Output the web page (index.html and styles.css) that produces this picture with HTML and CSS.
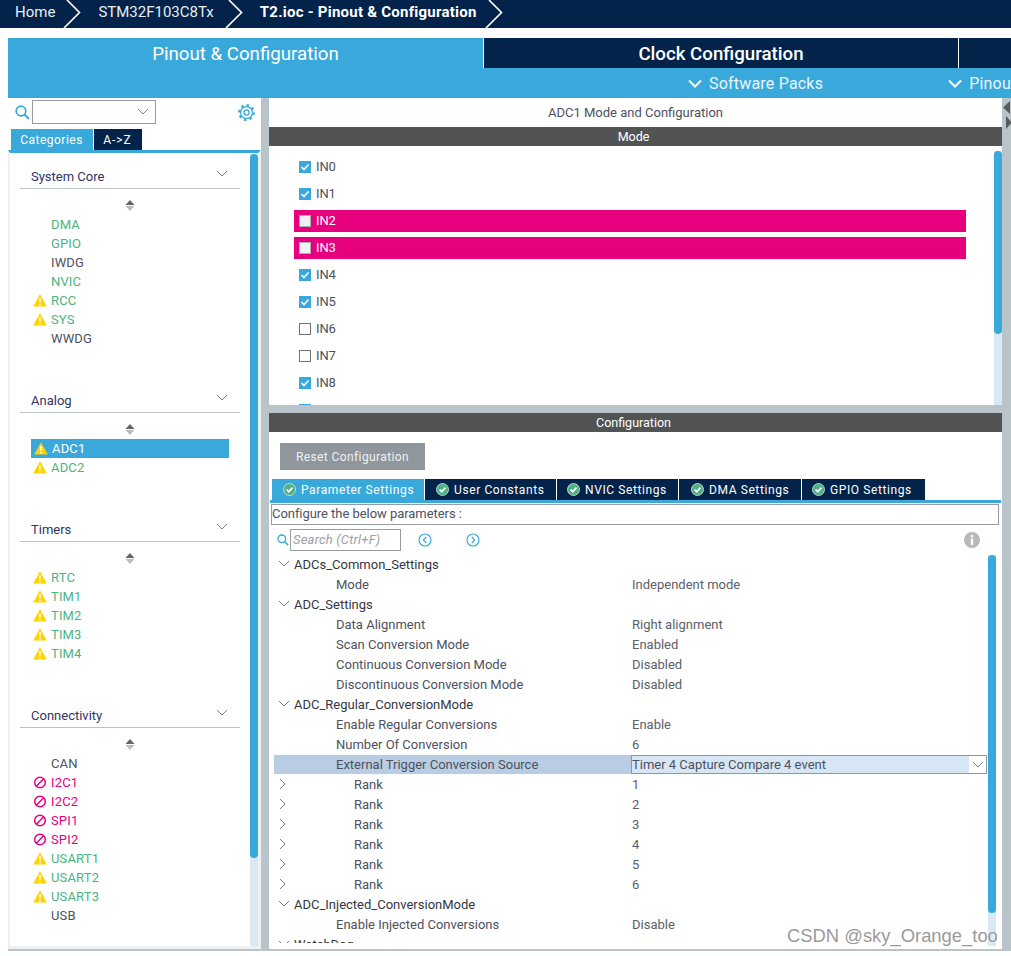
FILE: index.html
```html
<!DOCTYPE html>
<html lang="en">
<head>
<meta charset="utf-8">
<title>T2.ioc - Pinout &amp; Configuration</title>
<link rel="stylesheet" href="styles.css">
</head>
<body>
<svg class="defs" width="0" height="0" aria-hidden="true">
  <symbol id="crumb" viewBox="0 0 18 28"><path d="M4 0 L16.5 12.5 L1 28" fill="none" stroke="#fff" stroke-width="1.6"/></symbol>
  <symbol id="chev" viewBox="0 0 12 8"><path d="M1 1 L6 6 L11 1" fill="none" stroke="#7b8084" stroke-width="1"/></symbol>
  <symbol id="chev-r" viewBox="0 0 8 12"><path d="M1 1 L6 6 L1 11" fill="none" stroke="#7b8084" stroke-width="1"/></symbol>
  <symbol id="chev-w" viewBox="0 0 14 9"><path d="M1 1.5 L7 7.5 L13 1.5" fill="none" stroke="#fff" stroke-width="2"/></symbol>
  <symbol id="sort" viewBox="0 0 10 11"><path d="M5 0 L9.5 5 H0.5 Z" fill="#666"/><path d="M0.5 6 H9.5 L5 11 Z" fill="#bcbcbc"/></symbol>
  <symbol id="warn" viewBox="0 0 14 13"><path d="M7 0.3 L13.8 12.6 H0.2 Z" fill="#ffd200"/><path d="M6.2 4 H7.8 L7.6 9 H6.4 Z M6.2 10 H7.8 V11.6 H6.2 Z" fill="#fff"/></symbol>
  <symbol id="ban" viewBox="0 0 13 13"><circle cx="6.5" cy="6.5" r="5.3" fill="none" stroke="#e6007e" stroke-width="1.5"/><path d="M2.8 10.2 L10.2 2.8" stroke="#e6007e" stroke-width="1.5"/></symbol>
  <symbol id="tick" viewBox="0 0 12 12"><path d="M2.5 6 L5 8.5 L9.5 3.5" fill="none" stroke="#fff" stroke-width="1.6"/></symbol>
  <symbol id="okc" viewBox="0 0 13 13"><circle cx="6.5" cy="6.5" r="6" fill="#4cb184" stroke="#d7efe4" stroke-width="0.8"/><path d="M3.6 6.6 L5.8 8.7 L9.5 4.7" fill="none" stroke="#fff" stroke-width="1.7"/></symbol>
  <symbol id="mag" viewBox="0 0 15 15"><circle cx="6" cy="6" r="4.8" fill="none" stroke="#39a9dc" stroke-width="1.7"/><path d="M9.5 9.5 L14 14" stroke="#39a9dc" stroke-width="1.9"/></symbol>
</svg>

<header class="crumbs">
  <span class="crumb crumb-home">Home</span><svg class="crumb-sep sep-1"><use href="#crumb"/></svg>
  <span class="crumb crumb-mcu">STM32F103C8Tx</span><svg class="crumb-sep sep-2"><use href="#crumb"/></svg>
  <span class="crumb crumb-cur">T2.ioc - Pinout &amp; Configuration</span><svg class="crumb-sep sep-3"><use href="#crumb"/></svg>
</header>

<nav class="tabs">
  <div class="tab tab-on">Pinout &amp; Configuration</div>
  <div class="tab tab-clock">Clock Configuration</div>
  <div class="tab tab-rest"></div>
</nav>
<div class="subtabs">
  <svg class="sub-chev chev-a"><use href="#chev-w"/></svg><span class="sub-label label-a">Software Packs</span>
  <svg class="sub-chev chev-b"><use href="#chev-w"/></svg><span class="sub-label">Pinout</span>
</div>

<main class="main">
  <aside class="left">
    <div class="left-top">
      <svg class="mag"><use href="#mag"/></svg>
      <div class="combo"><svg class="combo-chev"><use href="#chev"/></svg></div>
      <svg class="gear" viewBox="0 0 16 16"><circle cx="8" cy="8" r="5.6" fill="none" stroke="#39a9dc" stroke-width="1.2"/><circle cx="8" cy="8" r="6.9" fill="none" stroke="#39a9dc" stroke-width="2" stroke-dasharray="2.4 3"/><circle cx="8" cy="8" r="2.4" fill="none" stroke="#39a9dc" stroke-width="1.2"/></svg>
    </div>
    <div class="left-tabs">
      <div class="ltab ltab-on">Categories</div>
      <div class="ltab ltab-off">A-&gt;Z</div>
    </div>
    <div class="left-body">
      <div class="cats">
        <section class="cat">
          <div class="cat-head"><span>System Core</span><svg class="cat-chev"><use href="#chev"/></svg></div>
          <div class="sort-row"><svg class="sort"><use href="#sort"/></svg></div>
          <div class="item ok"><i class="slot"></i>DMA</div>
          <div class="item ok"><i class="slot"></i>GPIO</div>
          <div class="item"><i class="slot"></i>IWDG</div>
          <div class="item ok"><i class="slot"></i>NVIC</div>
          <div class="item ok"><svg class="slot"><use href="#warn"/></svg>RCC</div>
          <div class="item ok"><svg class="slot"><use href="#warn"/></svg>SYS</div>
          <div class="item"><i class="slot"></i>WWDG</div>
        </section>
        <section class="cat">
          <div class="cat-head"><span>Analog</span><svg class="cat-chev"><use href="#chev"/></svg></div>
          <div class="sort-row"><svg class="sort"><use href="#sort"/></svg></div>
          <div class="item sel"><svg class="slot"><use href="#warn"/></svg>ADC1</div>
          <div class="item ok"><svg class="slot"><use href="#warn"/></svg>ADC2</div>
        </section>
        <section class="cat">
          <div class="cat-head"><span>Timers</span><svg class="cat-chev"><use href="#chev"/></svg></div>
          <div class="sort-row"><svg class="sort"><use href="#sort"/></svg></div>
          <div class="item ok"><svg class="slot"><use href="#warn"/></svg>RTC</div>
          <div class="item ok"><svg class="slot"><use href="#warn"/></svg>TIM1</div>
          <div class="item ok"><svg class="slot"><use href="#warn"/></svg>TIM2</div>
          <div class="item ok"><svg class="slot"><use href="#warn"/></svg>TIM3</div>
          <div class="item ok"><svg class="slot"><use href="#warn"/></svg>TIM4</div>
        </section>
        <section class="cat">
          <div class="cat-head"><span>Connectivity</span><svg class="cat-chev"><use href="#chev"/></svg></div>
          <div class="sort-row"><svg class="sort"><use href="#sort"/></svg></div>
          <div class="item"><i class="slot"></i>CAN</div>
          <div class="item bad"><svg class="slot"><use href="#ban"/></svg>I2C1</div>
          <div class="item bad"><svg class="slot"><use href="#ban"/></svg>I2C2</div>
          <div class="item bad"><svg class="slot"><use href="#ban"/></svg>SPI1</div>
          <div class="item bad"><svg class="slot"><use href="#ban"/></svg>SPI2</div>
          <div class="item ok"><svg class="slot"><use href="#warn"/></svg>USART1</div>
          <div class="item ok"><svg class="slot"><use href="#warn"/></svg>USART2</div>
          <div class="item ok"><svg class="slot"><use href="#warn"/></svg>USART3</div>
          <div class="item"><i class="slot"></i>USB</div>
        </section>
      </div>
      <div class="scroll scroll-left"><div class="thumb"></div></div>
    </div>
  </aside>

  <div class="right">
    <section class="mode-pane">
      <div class="pane-title">ADC1 Mode and Configuration</div>
      <div class="bar">Mode</div>
      <div class="mode-body">
        <div class="mode-list">
          <div class="mode-item"><svg class="cb cb-on"><use href="#tick"/></svg>IN0</div>
          <div class="mode-item"><svg class="cb cb-on"><use href="#tick"/></svg>IN1</div>
          <div class="mode-item bad-row"><i class="cb cb-bad"></i>IN2</div>
          <div class="mode-item bad-row"><i class="cb cb-bad"></i>IN3</div>
          <div class="mode-item"><svg class="cb cb-on"><use href="#tick"/></svg>IN4</div>
          <div class="mode-item"><svg class="cb cb-on"><use href="#tick"/></svg>IN5</div>
          <div class="mode-item"><i class="cb cb-off"></i>IN6</div>
          <div class="mode-item"><i class="cb cb-off"></i>IN7</div>
          <div class="mode-item"><svg class="cb cb-on"><use href="#tick"/></svg>IN8</div>
          <div class="mode-item"><svg class="cb cb-on"><use href="#tick"/></svg>IN9</div>
        </div>
        <div class="scroll scroll-mode"><div class="thumb"></div></div>
      </div>
    </section>

    <section class="cfg-pane">
      <div class="bar">Configuration</div>
      <button class="reset">Reset Configuration</button>
      <div class="cfg-tabs">
        <div class="ctab ctab-on ctab-1"><svg class="okc"><use href="#okc"/></svg>Parameter Settings</div>
        <div class="ctab ctab-2"><svg class="okc"><use href="#okc"/></svg>User Constants</div>
        <div class="ctab ctab-3"><svg class="okc"><use href="#okc"/></svg>NVIC Settings</div>
        <div class="ctab ctab-4"><svg class="okc"><use href="#okc"/></svg>DMA Settings</div>
        <div class="ctab ctab-5"><svg class="okc"><use href="#okc"/></svg>GPIO Settings</div>
      </div>
      <div class="desc">Configure the below parameters :</div>
      <div class="search-row">
        <svg class="mag mag-small"><use href="#mag"/></svg>
        <div class="search">Search (Ctrl+F)</div>
        <svg class="nav nav-prev" viewBox="0 0 14 14"><circle cx="7" cy="7" r="6" fill="none" stroke="#39a9dc" stroke-width="1.2"/><path d="M8.3 4 L5.3 7 L8.3 10" fill="none" stroke="#39a9dc" stroke-width="1.2"/></svg>
        <svg class="nav nav-next" viewBox="0 0 14 14"><circle cx="7" cy="7" r="6" fill="none" stroke="#39a9dc" stroke-width="1.2"/><path d="M5.7 4 L8.7 7 L5.7 10" fill="none" stroke="#39a9dc" stroke-width="1.2"/></svg>
        <svg class="info" viewBox="0 0 16 16"><circle cx="8" cy="8" r="8" fill="#b9b9b9"/><rect x="6.9" y="3" width="2.2" height="2.2" fill="#fff"/><rect x="6.9" y="6.4" width="2.2" height="6.6" fill="#fff"/></svg>
      </div>
      <div class="cfg-main">
        <div class="tree">
          <div class="row group"><svg class="tw"><use href="#chev"/></svg><span>ADCs_Common_Settings</span></div>
          <div class="row"><span class="name">Mode</span><span class="val">Independent mode</span></div>
          <div class="row group"><svg class="tw"><use href="#chev"/></svg><span>ADC_Settings</span></div>
          <div class="row"><span class="name">Data Alignment</span><span class="val">Right alignment</span></div>
          <div class="row"><span class="name">Scan Conversion Mode</span><span class="val">Enabled</span></div>
          <div class="row"><span class="name">Continuous Conversion Mode</span><span class="val">Disabled</span></div>
          <div class="row"><span class="name">Discontinuous Conversion Mode</span><span class="val">Disabled</span></div>
          <div class="row group"><svg class="tw"><use href="#chev"/></svg><span>ADC_Regular_ConversionMode</span></div>
          <div class="row"><span class="name">Enable Regular Conversions</span><span class="val">Enable</span></div>
          <div class="row"><span class="name">Number Of Conversion</span><span class="val">6</span></div>
          <div class="row row-sel"><span class="name">External Trigger Conversion Source</span>
            <div class="val-combo"><span class="val-text">Timer 4 Capture Compare 4 event</span><span class="val-arrow"><svg class="combo-chev"><use href="#chev"/></svg></span></div>
          </div>
          <div class="row rank"><svg class="tw-r"><use href="#chev-r"/></svg><span class="name">Rank</span><span class="val">1</span></div>
          <div class="row rank"><svg class="tw-r"><use href="#chev-r"/></svg><span class="name">Rank</span><span class="val">2</span></div>
          <div class="row rank"><svg class="tw-r"><use href="#chev-r"/></svg><span class="name">Rank</span><span class="val">3</span></div>
          <div class="row rank"><svg class="tw-r"><use href="#chev-r"/></svg><span class="name">Rank</span><span class="val">4</span></div>
          <div class="row rank"><svg class="tw-r"><use href="#chev-r"/></svg><span class="name">Rank</span><span class="val">5</span></div>
          <div class="row rank"><svg class="tw-r"><use href="#chev-r"/></svg><span class="name">Rank</span><span class="val">6</span></div>
          <div class="row group"><svg class="tw"><use href="#chev"/></svg><span>ADC_Injected_ConversionMode</span></div>
          <div class="row"><span class="name">Enable Injected Conversions</span><span class="val">Disable</span></div>
          <div class="row group"><svg class="tw"><use href="#chev"/></svg><span>WatchDog</span></div>
        </div>
        <div class="scroll scroll-cfg"><div class="thumb"></div></div>
      </div>
    </section>
  </div>
  <div class="gutter-r">
    <svg class="split" viewBox="0 0 9 30"><path d="M8 2 L1 8.5 L8 15 Z" fill="#5a5a5a"/><path d="M4 17 L10 23.5 L4 30 Z" fill="#5a5a5a"/></svg>
  </div>
</main>
<div class="mark">CSDN @sky_Orange_too</div>
</body>
</html>
```
FILE: styles.css
```css
* { box-sizing: border-box; }
html, body { margin: 0; height: 100%; }
body {
  position: relative;
  width: 1011px;
  height: 956px;
  overflow: hidden;
  background: #fff;
  color: #4d5160;
  font-family: Roboto, "Liberation Sans", sans-serif;
  font-size: 12px;
}
.defs { position: absolute; }
svg { display: block; flex: none; }

/* breadcrumb */
.crumbs {
  display: flex;
  align-items: center;
  height: 28px;
  background: #03234b;
  color: #e8edf2;
  font-size: 15px;
  white-space: nowrap;
}
.crumb { padding-bottom: 4px; }
.crumb-home { margin-left: 15px; }
.crumb-sep { width: 18px; height: 28px; }
.sep-1 { margin-left: 8px; }
.crumb-mcu { margin-left: 17px; }
.sep-2 { margin-left: 11px; }
.crumb-cur { margin-left: 17px; color: #fff; font-weight: 700; letter-spacing: .24px; }
.sep-3 { margin-left: 8px; }

/* main tabs */
.tabs {
  display: flex;
  height: 30px;
  margin: 10px 0 0 8px;
}
.tab {
  display: flex;
  align-items: center;
  justify-content: center;
  height: 30px;
  padding-top: 1px;
  background: #03234b;
  color: #fff;
  font-size: 18.7px;
  font-weight: 500;
}
.tab-on { width: 475px; background: #39a9dc; font-weight: 400; }
.tab-clock { width: 474px; margin-left: 1px; }
.tab-rest { width: 52px; margin-left: 1px; }
.subtabs {
  display: flex;
  align-items: center;
  height: 30px;
  margin-left: 8px;
  background: #39a9dc;
  color: #e9f5fb;
  font-size: 16px;
  white-space: nowrap;
  overflow: hidden;
}
.sub-chev { width: 14px; height: 9px; }
.chev-a { margin-left: 680px; }
.chev-b { margin-left: 125px; }
.sub-label { margin-left: 7px; letter-spacing: .2px; }

/* frame */
.main {
  display: flex;
  height: 853px;
  margin-left: 8px;
  padding-bottom: 2px;
  background: #b8c4ca;
}

/* left column */
.left {
  display: flex;
  flex-direction: column;
  width: 253px;
  margin-right: 8px;
  background: #fff;
}
.left-top {
  display: flex;
  align-items: center;
  height: 31px;
  padding: 0 0 3px 7px;
}
.mag { width: 15px; height: 15px; }
.combo {
  display: flex;
  align-items: center;
  justify-content: flex-end;
  width: 124px;
  height: 24px;
  margin-left: 2px;
  padding-right: 6px;
  border: 1px solid #969ca2;
}
.combo-chev { width: 12px; height: 8px; }
.gear { width: 17px; height: 17px; margin-left: 82px; }
.left-tabs {
  display: flex;
  height: 21px;
  padding-left: 3px;
}
.ltab {
  display: flex;
  align-items: center;
  justify-content: center;
  color: #fff;
  letter-spacing: .5px;
}
.ltab-on { width: 82px; padding-right: 1px; background: #39a9dc; }
.ltab-off { width: 48px; margin-left: 1px; padding-right: 1px; background: #03234b; letter-spacing: 1px; }
.left-body {
  display: flex;
  flex: 1;
  min-height: 0;
  border-top: 3px solid #39a9dc;
  border-left: 2px solid #eef0f2;
  border-right: 3px solid #eef0f2;
  border-bottom: 3px solid #eef0f2;
}
.cats { flex: 1; min-width: 0; padding: 11px 10px 0; overflow: hidden; }
.cat { margin-bottom: 40px; }
.cat-head {
  display: flex;
  align-items: center;
  justify-content: space-between;
  height: 25px;
  padding: 1px 12px 0 11px;
  border-bottom: 1px solid #b8c4ca;
  color: #2f3566;
  font-size: 13px;
}
.cat-chev { width: 12px; height: 8px; margin-bottom: 6px; }
.sort-row {
  display: flex;
  justify-content: center;
  align-items: center;
  height: 19px;
  margin-top: 7px;
  padding-right: 1px;
}
.sort { width: 10px; height: 11px; }
.item {
  display: flex;
  align-items: center;
  width: 198px;
  height: 19px;
  margin-left: 11px;
  padding-left: 13px;
  padding-bottom: 1px;
  font-size: 13px;
  letter-spacing: .15px;
  white-space: nowrap;
}
.slot { display: block; flex: none; width: 14px; height: 13px; margin-left: -11px; margin-right: 4px; }
.ok { color: #4ab57f; }
.bad { color: #e6007e; }
.sel { background: #39a9dc; color: #fff; padding-left: 14px; }

.scroll { flex: none; width: 8px; background: #d8e8f5; }
.thumb { background: #39a9dc; border-radius: 4px; }
.scroll-left { margin-top: 1px; }
.scroll-left .thumb { height: 704px; }

/* right column */
.right { display: flex; flex-direction: column; width: 733px; }
.mode-pane { display: flex; flex-direction: column; height: 307px; background: #fff; }
.pane-title {
  display: flex;
  align-items: center;
  justify-content: center;
  height: 29px;
  font-size: 13px;
}
.bar {
  flex: none;
  height: 19px;
  padding: 1px 4px 0 0;
  line-height: 18px;
  text-align: center;
  background: #525453;
  color: #fff;
  font-size: 12.5px;
}
.mode-body { display: flex; flex: 1; min-height: 0; }
.mode-list { flex: 1; min-width: 0; padding: 10px 0 0 25px; overflow: hidden; }
.mode-item {
  display: flex;
  align-items: center;
  width: 672px;
  height: 22px;
  margin-bottom: 5px;
  padding: 0 0 2px 5px;
  font-size: 13px;
  letter-spacing: -.1px;
}
.cb { display: block; flex: none; width: 12px; height: 12px; margin: 2px 5px 0 0; }
.cb-on { background: #39a9dc; }
.cb-off { background: #fff; border: 1px solid #6e7378; }
.cb-bad { background: #eff1f4; border: 1px solid #a9aeb3; }
.bad-row { background: #e6007e; color: #fff; }
.scroll-mode { margin-top: 5px; }
.scroll-mode .thumb { height: 183px; }

.cfg-pane {
  display: flex;
  flex-direction: column;
  flex: 1;
  min-height: 0;
  margin-top: 8px;
  background: #fff;
}
.reset {
  align-self: flex-start;
  width: 145px;
  height: 27px;
  margin: 11px 0 0 11px;
  padding: 0;
  border: 0;
  background: #8f969c;
  color: #eef0f2;
  font: 12px Roboto, "Liberation Sans", sans-serif;
  letter-spacing: .4px;
}
.cfg-tabs {
  display: flex;
  flex: none;
  height: 24px;
  margin: 9px 1px 0;
  padding-left: 2px;
  border-bottom: 3px solid #39a9dc;
}
.ctab {
  display: flex;
  align-items: center;
  height: 21px;
  margin-right: 1px;
  padding-left: 11px;
  background: #03234b;
  color: #fff;
  letter-spacing: .6px;
  white-space: nowrap;
}
.ctab-on { background: #39a9dc; }
.ctab-1 { width: 152px; }
.ctab-2 { width: 131px; }
.ctab-3 { width: 121px; padding-left: 10px; }
.ctab-4 { width: 122px; padding-left: 12px; }
.ctab-5 { width: 123px; padding-left: 10px; }
.okc { width: 13px; height: 13px; margin-right: 5px; }
.desc {
  flex: none;
  height: 21px;
  margin: 1px 3px 0 2px;
  border: 1px solid #969ca2;
  line-height: 18px;
  font-size: 13px;
  letter-spacing: -.05px;
}
.search-row {
  display: flex;
  flex: none;
  align-items: center;
  height: 29px;
  padding-left: 8px;
}
.mag-small { width: 12px; height: 12px; }
.search {
  width: 111px;
  height: 22px;
  margin-left: 1px;
  padding-left: 2px;
  border: 1px solid #969ca2;
  color: #9da1a5;
  font-style: italic;
  font-size: 13px;
  line-height: 20px;
  letter-spacing: .2px;
}
.nav { width: 14px; height: 14px; }
.nav-prev { margin-left: 17px; }
.nav-next { margin-left: 34px; }
.info { width: 16px; height: 16px; margin-left: 484px; }

.cfg-main {
  display: flex;
  height: 392px;
  padding: 0 6px 0 5px;
}
.tree { width: 714px; height: 389px; overflow: hidden; }
.row {
  display: flex;
  align-items: center;
  height: 20px;
  padding-left: 62px;
  font-size: 13px;
  white-space: nowrap;
}
.row .name { flex: none; width: 295px; }
.row .val { margin-left: 1px; color: #5b6069; }
.group { padding-left: 4px; color: #33363e; }
.tw { width: 12px; height: 8px; margin-right: 4px; }
.rank { padding-left: 5px; }
.tw-r { width: 8px; height: 12px; margin-right: 67px; }
.rank .name { width: 277px; }
.row-sel {
  width: 713px;
  height: 19px;
  margin-top: 1px;
  background: #b8cde4;
}
.val-combo {
  display: flex;
  align-items: stretch;
  width: 356px;
  height: 19px;
  border: 1px solid #8f969c;
  background: #d6e6f4;
}
.val-text { flex: 1; line-height: 17px; color: #4d5160; }
.val-arrow { display: flex; align-items: center; justify-content: center; width: 17px; background: #fff; }
.scroll-cfg { margin-top: 1px; }
.scroll-cfg .thumb { height: 358px; }

.gutter-r { flex: 1; }
.split { width: 9px; height: 30px; margin-top: 1px; }

/* watermark */
.mark {
  position: absolute;
  left: 787px;
  top: 925px;
  color: #9a9a9a;
  font-family: "Liberation Sans", sans-serif;
  font-size: 18.4px;
  text-shadow: 0 0 2px #fff;
  white-space: nowrap;
}
```
